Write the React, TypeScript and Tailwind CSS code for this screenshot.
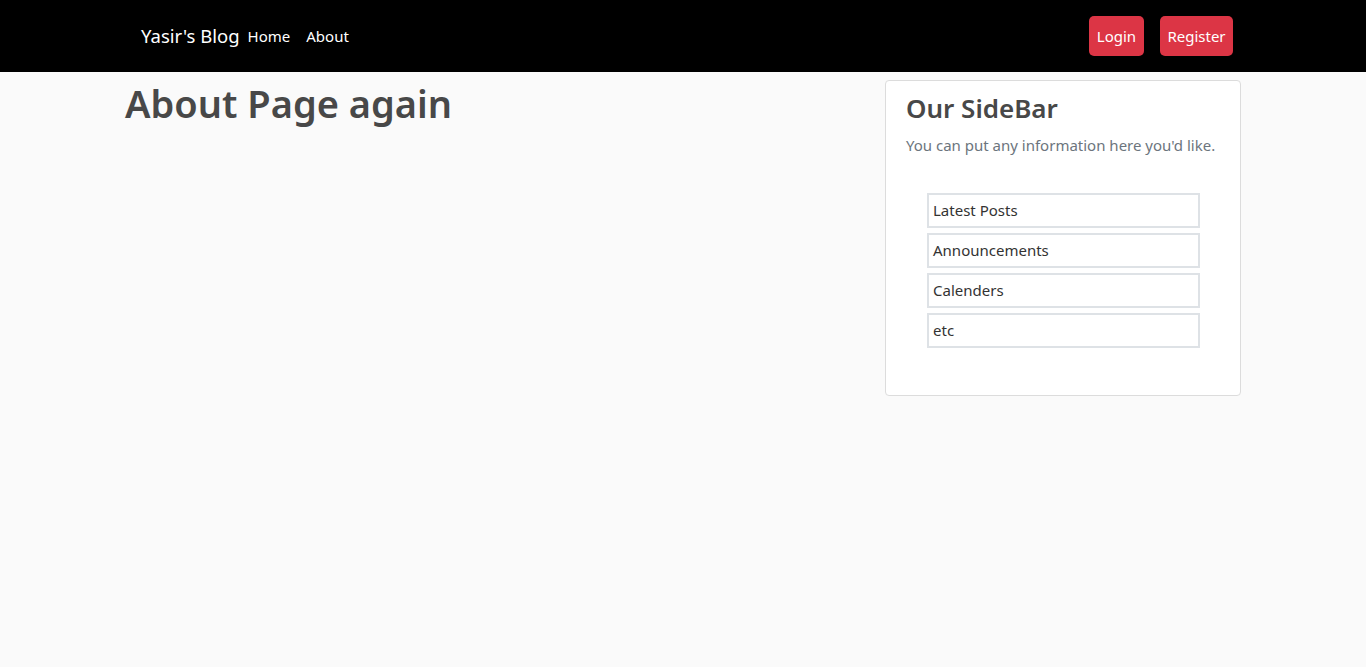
import React from "react";

export default function App() {
  const font = { fontFamily: '"Segoe UI", "Noto Sans", "Open Sans", sans-serif' };
  const items = ["Latest Posts", "Announcements", "Calenders", "etc"];
  return (
    <div className="min-h-[667px] bg-[#fafafa]" style={font}>
      <nav className="h-[72px] bg-black flex items-center">
        <div className="w-[1140px] mx-auto flex items-center pl-[28px] pr-[20px]">
          <a className="text-white text-[18.5px] leading-none mr-[8px]">Yasir's Blog</a>
          <a className="text-white text-[15px] mr-[16px]">Home</a>
          <a className="text-white text-[15px]">About</a>
          <div className="ml-auto flex items-center gap-[16px]">
            <button className="h-[40px] w-[55px] rounded-[5px] bg-[#dc3545] text-white text-[15px]">Login</button>
            <button className="h-[40px] w-[73px] rounded-[5px] bg-[#dc3545] text-white text-[15px]">Register</button>
          </div>
        </div>
      </nav>
      <div className="w-[1140px] mx-auto flex pl-[12px] pr-[12px]">
        <div className="flex-1">
          <h1 className="text-[38px] font-semibold text-[#484848] leading-[1.2] mt-[9px]">About Page again</h1>
        </div>
        <aside className="w-[356px] mt-[8px] bg-white border border-[#dcdcdc] rounded-[4px] pl-[20px] pr-[20px] pt-[12px] pb-[47px]">
          <h3 className="text-[26px] font-semibold text-[#484848] leading-[1.2]">Our SideBar</h3>
          <p className="text-[15px] text-[#6c757d] mt-[10px] whitespace-nowrap">You can put any information here you'd like.</p>
          <ul className="mt-[36px] ml-[21px] w-[273px] flex flex-col gap-[5px]">
            {items.map((it) => (
              <li key={it} className="h-[35px] border-2 border-[#dee2e6] flex items-center pl-[4px] text-[15px] text-[#333]">
                {it}
              </li>
            ))}
          </ul>
        </aside>
      </div>
    </div>
  );
}
